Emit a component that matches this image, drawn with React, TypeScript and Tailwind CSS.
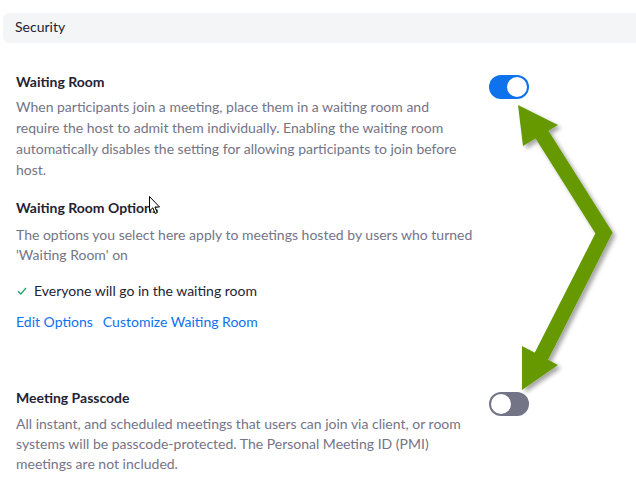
import React from "react";

type ToggleProps = { on: boolean };

function Toggle({ on }: ToggleProps) {
  return (
    <div
      className={`flex h-6 w-10 items-center rounded-full p-[2px] ${
        on ? "justify-end bg-[#0e72ed]" : "justify-start bg-[#747487]"
      }`}
    >
      <div className="h-5 w-5 rounded-full bg-white" />
    </div>
  );
}

function Overlay() {
  return (
    <svg
      className="pointer-events-none absolute left-0 top-0"
      width={636}
      height={500}
      viewBox="0 0 636 500"
    >
      <defs>
        <filter id="sh" x="-20%" y="-20%" width="140%" height="140%">
          <feDropShadow dx="3" dy="3" stdDeviation="2" floodColor="#000" floodOpacity="0.35" />
        </filter>
      </defs>
      <g filter="url(#sh)" fill="#669900">
        <path
          d="M541 133 L604 233 L541 357"
          fill="none"
          stroke="#669900"
          strokeWidth={15}
          strokeLinejoin="miter"
          strokeMiterlimit={10}
        />
        <polygon points="518,105 558,125 523,146" />
        <polygon points="522,390 522,346 558,365" />
      </g>
      {/* mouse pointer */}
      <path
        d="M149.5 196.5 L149.5 211 L152.8 207.8 L155.2 213.5 L157.3 212.6 L154.9 207 L159.5 207 Z"
        fill="#fff"
        stroke="#000"
        strokeWidth={1}
        strokeLinejoin="round"
      />
    </svg>
  );
}

export default function App() {
  return (
    <div
      className="relative h-[500px] w-[636px] overflow-hidden bg-white text-[14px] text-[#232333]"
      style={{ fontFamily: "Lato, 'Open Sans', sans-serif" }}
    >
      <div className="pt-[13px]">
        <div className="-mr-4 ml-[3px] flex h-[30px] items-center rounded-md bg-[#f4f5f7] pb-[3px] pl-3">
          Security
        </div>
      </div>

      <div className="pl-4">
        {/* Waiting Room */}
        <div className="mt-[29px] flex">
          <div className="w-[458px]">
            <div className="font-bold leading-5">Waiting Room</div>
            <p className="mt-[4px] leading-[21px] text-[#747487]">
              When participants join a meeting, place them in a waiting room and require the host to admit them
              individually. Enabling the waiting room automatically disables the setting for allowing participants
              to join before host.
            </p>
          </div>
          <div className="ml-[15px] pt-[3px]">
            <Toggle on />
          </div>
        </div>

        {/* Waiting Room Options */}
        <div className="mt-[18px] w-[458px]">
          <div className="font-bold leading-5">Waiting Room Options</div>
          <p className="mt-[7px] leading-5 text-[#747487]">
            The options you select here apply to meetings hosted by users who turned 'Waiting Room' on
          </p>
          <div className="mt-[16px] flex items-center gap-[7px] leading-5">
            <svg width="10" height="8" viewBox="0 0 10 8" className="ml-[1px]">
              <path d="M1 4.2 L3.8 7 L9 1" fill="none" stroke="#23a26d" strokeWidth={1.3} />
            </svg>
            <span>Everyone will go in the waiting room</span>
          </div>
          <div className="mt-[11px] flex gap-[10px] leading-5 text-[#0e72ed]">
            <span>Edit Options</span>
            <span>Customize Waiting Room</span>
          </div>
        </div>

        {/* Meeting Passcode */}
        <div className="mt-[56px] flex">
          <div className="w-[458px]">
            <div className="font-bold leading-5">Meeting Passcode</div>
            <p className="mt-[6px] leading-5 text-[#747487]">
              All instant, and scheduled meetings that users can join via client, or room systems will be
              passcode-protected. The Personal Meeting ID (PMI) meetings are not included.
            </p>
          </div>
          <div className="ml-[15px] pt-[4px]">
            <Toggle on={false} />
          </div>
        </div>
      </div>

      <Overlay />
    </div>
  );
}
